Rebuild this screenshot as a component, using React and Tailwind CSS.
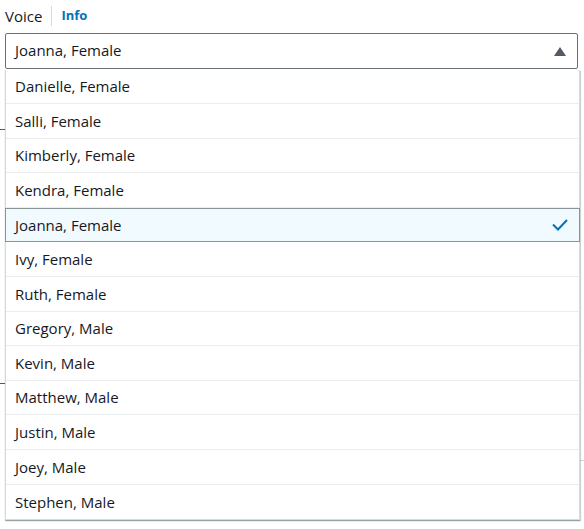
import React from 'react';

const voices = [
  'Danielle, Female',
  'Salli, Female',
  'Kimberly, Female',
  'Kendra, Female',
  'Joanna, Female',
  'Ivy, Female',
  'Ruth, Female',
  'Gregory, Male',
  'Kevin, Male',
  'Matthew, Male',
  'Justin, Male',
  'Joey, Male',
  'Stephen, Male',
];

const selected = 'Joanna, Female';

export default function App() {
  return (
    <div
      className="relative w-[584px] h-[529px] bg-white text-[#16191f] overflow-hidden"
      style={{ fontFamily: '"Open Sans", "Liberation Sans", sans-serif' }}
    >
      {/* Label */}
      <div className="flex items-center h-[20px] mt-[6px] pl-[5px] text-[15px]">
        <span>Voice</span>
        <span className="mx-[9px] h-[20px] w-px bg-[#d5dbdb]" />
        <span className="text-[13px] font-bold text-[#0073bb]">Info</span>
      </div>

      {/* Select trigger */}
      <div className="mt-[7px] mx-[5px] mr-[6px] h-[36px] flex items-center justify-between pl-[9px] pr-[10px] border border-[#687078] rounded-[2px] text-[15px]">
        <span className="-mt-px">Joanna, Female</span>
        <svg width="12" height="9" viewBox="0 0 12 9" className="mr-[1px]">
          <path d="M6 0 L12 9 L0 9 Z" fill="#545b64" />
        </svg>
      </div>

      {/* Page content underneath the dropdown */}
      <div className="mt-[60px] w-[10px] border-t border-[#545b64]" />
      <div className="mt-[253px] w-[10px] border-t border-[#545b64]" />
      <div className="mt-[76px] ml-[560px] border-t border-[#d5dbdb]" />

      {/* Dropdown list */}
      <div className="absolute left-[5px] top-[69.5px] w-[575px] bg-white border-l border-r border-b border-[#d5dbdb] shadow-[0_1px_1px_0_rgba(0,28,36,0.3),1px_1px_1px_0_rgba(0,28,36,0.15)] text-[15px]">
        {voices.map((v, i) => {
          const isSel = v === selected;
          const last = i === voices.length - 1;
          return (
            <div
              key={v}
              className={
                isSel
                  ? 'h-[34.6px] flex items-center justify-between pl-[9px] pr-[10px] bg-[#f1faff] border border-[#879596] -ml-px -mr-px'
                  : `h-[34.6px] flex items-center pl-[9px] ${last ? '' : 'border-b border-[#eaeded]'}`
              }
            >
              <span>{v}</span>
              {isSel && (
                <svg width="18" height="14" viewBox="0 0 18 14" fill="none">
                  <path d="M2 6.5 L7 11.5 L16 2" stroke="#0073bb" strokeWidth="2" />
                </svg>
              )}
            </div>
          );
        })}
      </div>
    </div>
  );
}
